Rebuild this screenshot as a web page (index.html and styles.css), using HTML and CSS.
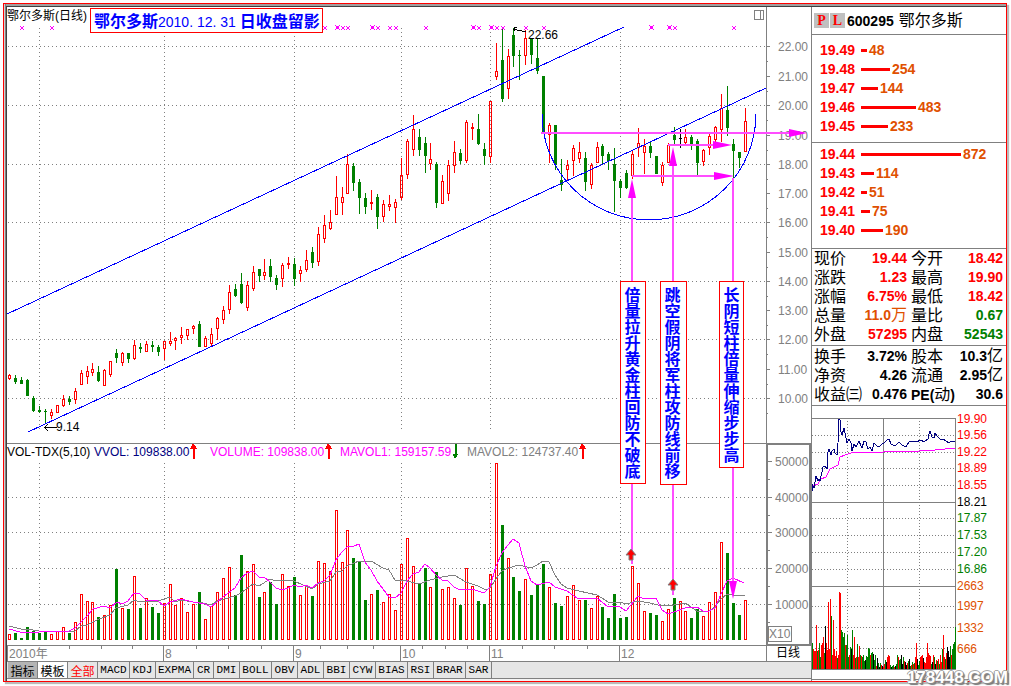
FILE: index.html
```html
<!DOCTYPE html>
<html lang="zh-CN">
<head>
<meta charset="utf-8">
<title>鄂尔多斯(日线) 600295</title>
<meta name="viewport" content="width=device-width, initial-scale=1">
<link rel="stylesheet" href="styles.css">
</head>
<body>
<div class="frame">
<div class="window">
  <main class="main">
    <svg class="chart" viewBox="7 7 804 655" role="img" aria-label="鄂尔多斯日线">
      <g class="grid" id="grid"></g>
      <g class="rule">
        <path d="M766.5 7V662M7 443.5H811M7 645.5H811M7 661.5H811M7.5 645V662"/>
        <path class="thick" d="M767 444H810V645H767Z"/>
        <path id="ticks"/>
        <rect x="768.5" y="626.5" width="23" height="15"/>
        <path d="M754.5 10.5H763.5V19.5H754.5ZM760.5 10V20"/>
      </g>
      <g id="axis" class="axis"></g>
      <g id="marks" class="marks"></g>
      <g id="candles"></g>
      <polyline class="ma2" points="9,626 21,629 33,630 39,631 69,632 75,631 81,626 87,625 99,619 110,615 116,608 128,605 134,600 140,602 158,601 170,597 175,602 181,600 193,602 199,602 211,605 217,601 235,596 241,593 253,584 259,586 270,579 276,581 282,580 294,581 312,589 318,584 330,581 336,572 342,571 347,566 359,561 371,561 383,568 389,570 395,580 407,581 419,584 430,580 442,577 454,575 466,582 478,586 486,590 490,588 496,579 502,571 508,568 519,565 531,568 537,565 543,561 549,562 555,575 561,584 567,588 579,591 597,595 602,598 608,602 620,602 626,604 638,601 650,603 662,606 674,605 685,603 697,611 709,611 715,607 721,599 727,594 739,596 745,595"/>
      <polyline class="ma1" points="9,629 20,632 39,632 69,631 75,628 87,616 93,609 104,606 110,608 117,602 122,604 128,601 134,593 140,594 146,600 158,601 164,606 170,602 181,599 193,602 205,604 211,607 217,602 223,597 235,588 241,578 247,573 253,571 259,577 264,577 270,582 276,588 282,590 288,588 294,585 300,587 306,585 312,588 318,583 324,581 330,575 336,560 342,552 347,547 354,546 359,544 365,562 371,570 377,581 383,589 389,597 395,598 401,593 407,581 413,574 419,572 425,564 430,568 436,575 442,580 448,581 454,587 460,590 472,589 484,593 490,587 496,566 502,553 508,545 513,539 519,543 525,566 531,581 537,585 549,582 555,587 567,591 577,598 597,598 608,607 615,606 620,607 626,611 638,596 644,599 656,598 662,610 668,614 674,612 685,608 697,607 703,611 709,611 715,608 721,594 727,581 733,578 744,583"/>

      <g class="trend">
        <path d="M7 314L624 27M28 432L766 88"/>
        <path d="M542 114A107 106 0 0 0 756 114"/>
      </g>

      <g class="pointer">
        <path d="M541 133H796M668 145H720M632 176H720M632 190V564M673 158V595M733 178V588"/>
        <path class="head" d="M807 133L789 129V137ZM732 145L713 141V149ZM734 176L714 172V180ZM632 179L628 198H636ZM673 147L669 166H677ZM733 599L729 581H737Z"/>
      </g>
      <g class="up"><path d="M631 549L636 555H633V560H629V555H626ZM673 579L678 585H675V590H671V585H668Z"/></g>

      <g class="note-box">
        <rect x="620.5" y="281.5" width="25" height="202"/>
        <rect x="660.5" y="281.5" width="26" height="203"/>
        <rect x="719.5" y="281.5" width="24" height="186"/>
        <rect x="90.5" y="8.5" width="232" height="24"/>
      </g>
      <g class="note">
        <text class="vertical" x="631" y="287">倍量拉升黄金柱回防不破底</text>
        <text class="vertical" x="671" y="287">跳空假阴将军柱攻防线前移</text>
        <text class="vertical" x="730" y="287">长阴短柱倍量伸缩步步高</text>
        <text x="94" y="27">鄂尔多斯<tspan class="date">2010. 12. 31 </tspan>日收盘留影</text>
      </g>

      <g class="black">
        <text x="7" y="20">鄂尔多斯(日线)</text>
        <text x="528" y="39">22.66</text>
        <text x="56" y="431">9.14</text>
        <text x="7" y="456">VOL-TDX(5,10)</text>
        <text x="776" y="657">日线</text>
        <path d="M513 29L526 32M517 27H514V31M45 427.5H57M48 424L45 427.5L48 431"/>
      </g>
      <text class="navy" x="94" y="456">VVOL: 109838.00</text>
      <text class="magenta" x="210" y="456">VOLUME: 109838.00</text>
      <text class="magenta" x="340" y="456">MAVOL1: 159157.59</text>
      <text class="gray" x="467" y="456">MAVOL2: 124737.40</text>
      <path class="sign-up" d="M193 444L196 448H194V458H193V448H191ZM328 444L331 448H329V458H328V448H326ZM582 444L585 448H583V458H582V448H580Z"/>
      <path class="sign-down" d="M455 458L458 454H456V444H455V454H453Z"/>
    </svg>

    <nav class="tabs" aria-label="指标">
      <button class="tab tab-cjk tab-dark" type="button">指标</button>
      <button class="tab tab-cjk tab-white" type="button">模板</button>
      <button class="tab tab-cjk tab-active" type="button">全部</button>
      <button class="tab w4" type="button">MACD</button>
      <button class="tab w3" type="button">KDJ</button>
      <button class="tab w5" type="button">EXPMA</button>
      <button class="tab w2" type="button">CR</button>
      <button class="tab w3" type="button">DMI</button>
      <button class="tab w4" type="button">BOLL</button>
      <button class="tab w3" type="button">OBV</button>
      <button class="tab w3" type="button">ADL</button>
      <button class="tab w3" type="button">BBI</button>
      <button class="tab w3" type="button">CYW</button>
      <button class="tab w4" type="button">BIAS</button>
      <button class="tab w3" type="button">RSI</button>
      <button class="tab w4" type="button">BRAR</button>
      <button class="tab w3" type="button">SAR</button>
    </nav>
  </main>

  <aside class="side">
    <header class="stock">
      <button class="badge" type="button">P</button>
      <button class="badge" type="button">L</button>
      <b class="code">600295</b>
      <span class="name">鄂尔多斯</span>
    </header>
    <ul class="book asks" id="asks"></ul>
    <ul class="book bids" id="bids"></ul>
    <table class="quote">
      <colgroup><col class="c1"><col class="c2"><col class="c3"><col></colgroup>
      <tbody>
        <tr><th>现价</th><td class="r">19.44</td><th>今开</th><td class="r">18.42</td></tr>
        <tr><th>涨跌</th><td class="r">1.23</td><th>最高</th><td class="r">19.90</td></tr>
        <tr><th>涨幅</th><td class="r">6.75%</td><th>最低</th><td class="r">18.42</td></tr>
        <tr><th>总量</th><td class="o">11.0<i>万</i></td><th>量比</th><td class="g">0.67</td></tr>
        <tr><th>外盘</th><td class="r">57295</td><th>内盘</th><td class="g">52543</td></tr>
      </tbody>
    </table>
    <table class="quote quote-b">
      <colgroup><col class="c1"><col class="c2"><col class="c3"><col></colgroup>
      <tbody>
        <tr><th>换手</th><td>3.72%</td><th>股本</th><td>10.3<i>亿</i></td></tr>
        <tr><th>净资</th><td>4.26</td><th>流通</th><td>2.95<i>亿</i></td></tr>
        <tr><th>收益㈢</th><td>0.476</td><th><b>PE(</b>动<b>)</b></th><td>30.6</td></tr>
      </tbody>
    </table>
    <svg class="chart" viewBox="812 406 194 275" role="img" aria-label="分时走势">
      <path class="dots" d="M812 435.5H955M812 452.5H955M812 468.5H955M812 485.5H955M812 518.5H955M812 535.5H955M812 552.5H955M812 569.5H955M812 606.5H955M812 627.5H955M812 648.5H955M847.5 418V669M919.5 418V669"/>
      <path class="rule" d="M812 418.5H955.5V669.5H812M812 502.5H955M812 586.5H955M883.5 418V669M812 679.5H1006"/>
      <g id="intraday"></g>
      <polyline class="avg" points="812,486 818,484 821,479 826,477 830,469 834,467 838,465 840,457 845,455 851,453 865,452 883,452 893,451 919,451 935,450 955,448"/>
      <polyline class="price" points="812,491 812,484 814,488 816,476 818,481 819,479 820,481 823,467 825,466 827,469 828,452 829,449 831,455 832,451 834,449 835,453 837,455 838,443 839,419 840,420 841,432 842,435 844,428 845,433 847,443 849,439 851,443 852,451 854,444 856,447 859,441 861,446 862,448 864,441 866,442 868,449 870,447 872,451 874,443 877,446 879,447 882,444 884,443 887,440 889,439 891,444 895,446 899,442 902,445 906,447 909,442 913,441 916,442 921,440 924,442 928,439 929,434 930,431 932,437 934,438 935,433 938,437 940,439 943,439 946,441 949,443 951,441 955,441"/>
      <g id="side-axis"></g>
    </svg>
  </aside>
</div>
</div>
<div class="watermark">178448.COM</div>
<script src="chart.js"></script>
</body>
</html>
```
FILE: styles.css
```css
* { box-sizing: border-box; }

body {
  margin: 0;
  position: relative;
  background: #fff;
  color: #000;
  font: 12px/16px "Liberation Sans", "Noto Sans CJK SC", sans-serif;
}

.frame {
  margin: 3px 4px 4px 3px;
  border: 1px solid #f00;
  box-shadow: 2px 2px 1px #bbb;
  background: linear-gradient(90deg, #d0d0d0 50%, #808080 50%) 0 0 / 2px 100% no-repeat;
  padding-left: 2px;
}

.window {
  display: grid;
  grid-template-columns: minmax(0, 1fr) 195px;
  border-left: 1px solid #404040;
  border-top: 1px solid #404040;
  box-shadow: 0 -2px 0 #a0a0a0;
  margin-top: 2px;
}

.main { display: flex; flex-direction: column; min-width: 0; }
.chart { display: block; width: 100%; height: auto; }

.chart path, .chart rect, .chart polyline, .chart line { shape-rendering: crispEdges; fill: none; stroke-width: 1; }
.chart text { font-size: 12px; }

.grid path { stroke: #808080; stroke-dasharray: 1 3; }
.rule, .rule path { stroke: #808080; }
.chart .thick { stroke-width: 2; }
.axis text, .gray { fill: #808080; }
.marks path { stroke: #f0f; }
.marks .solid { fill: #f0f; stroke: none; }

.chart .ma1, .chart .avg { stroke: #f0f; }
.chart .ma2 { stroke: #808080; }
.chart .price { stroke: #000080; }

.red path { stroke: #f00; }
.green path { stroke: #008000; }
.black path { stroke: #000; }
.chart .fill-red { fill: #f00; }
.chart .fill-green { fill: #008000; }
.chart .fill-black { fill: #000; }

.trend path { stroke: #00f; }
.chart .up path { fill: #f00; stroke: #808080; shape-rendering: auto; }
.chart .pointer path { stroke: #ff4dff; stroke-width: 2; }
.chart .pointer .head { fill: #f0f; stroke: none; shape-rendering: auto; }

.chart .note-box rect { fill: #fff; stroke: #f00; }
.chart .note text { fill: #00f; font-size: 16px; font-weight: 700; }
.note .vertical { writing-mode: vertical-rl; }
.note .date { font-size: 14px; font-weight: 400; }

.navy { fill: #000080; }
.magenta { fill: #f0f; }
.chart .sign-up { fill: #f00; stroke: #f00; }
.chart .sign-down { fill: #008000; stroke: #008000; }

.tabs {
  display: flex;
  flex: 1;
  padding: 0 0 2px 1px;
  background: linear-gradient(#808080, #808080) 0 16px / 100% 1px no-repeat,
    linear-gradient(#e6e6e6, #e6e6e6) 0 0 / 100% 16px no-repeat, #f4f4f4;
}

.tab {
  height: 17px;
  padding: 0;
  border: 0;
  border-right: 1px solid #808080;
  border-bottom: 1px solid #808080;
  background: #e6e6e6;
  color: #000;
  font: 11px/15px "Liberation Mono", monospace;
}

.tab-cjk { width: 30px; font: 12px/15px "Noto Sans CJK SC", sans-serif; }
.tab-dark { background: #b4b4b4; }
.tab-white { background: #fff; }
.tab-active { color: #f00; }
.w2 { width: 20px; }
.w3 { width: 26px; }
.w4 { width: 32px; }
.w5 { width: 38px; }

.side { border-left: 1px solid #808080; }

.stock {
  display: flex;
  align-items: center;
  gap: 1px;
  height: 28px;
  padding: 0 2px;
  border-bottom: 1px solid #808080;
}

.badge {
  width: 15px;
  height: 15px;
  padding: 0;
  border: 0;
  background: #c0c0c0;
  color: #f00;
  font: 700 14px/15px "Liberation Serif", serif;
}

.code { margin-left: 1px; font-size: 14px; }
.name { margin-left: 4px; font-size: 16px; }

.book {
  list-style: none;
  margin: 0;
  padding: 6px 0 6px 8px;
  border-bottom: 1px solid #808080;
  font-size: 14px;
  font-weight: 700;
  line-height: 19px;
  color: #f00;
}

.bids { padding: 2px 0 8px 8px; }
.book li { display: flex; align-items: center; gap: 2px; }
.book .cost { width: 39px; }
.book .bar { height: 3px; background: #f00; }
.book .lots { color: #e05000; }

.quote {
  width: 100%;
  table-layout: fixed;
  border-collapse: separate;
  border-spacing: 0;
  border-bottom: 1px solid #808080;
  padding-bottom: 1px;
  font-size: 14px;
  line-height: 17px;
}

.quote-b { padding: 1px 0; }
.c1 { width: 50px; }
.c2 { width: 45px; }
.c3 { width: 47px; }
.quote th { height: 19px; padding: 0 0 0 2px; font-size: 16px; font-weight: 400; text-align: left; white-space: nowrap; }
.quote td { height: 19px; padding: 0; font-weight: 700; text-align: right; white-space: nowrap; }
.quote td:last-child { padding-right: 3px; }
.quote th + td + th { padding-left: 4px; }
.quote th b { font-size: 14px; line-height: 1; }
.quote i { font-style: normal; font-weight: 400; font-size: 16px; line-height: 1; }
.r { color: #f00; }
.g { color: #008000; }
.o { color: #e05000; }

.chart .dots { stroke: #808080; stroke-dasharray: 1 2; }
.chart .t-red { fill: #f00; }
.chart .t-black { fill: #000; }
.chart .t-green { fill: #008000; }
.chart .t-orange { fill: #e05000; }

.watermark {
  position: absolute;
  right: 3px;
  bottom: -2px;
  color: #fff;
  font-size: 17px;
  font-weight: 700;
  line-height: 20px;
  text-shadow: 1px 1px 0 #888, -1px 0 0 #999, 0 -1px 0 #aaa, 1px 0 0 #888, 2px 2px 1px #777;
}
```
FILE: chart.js
```js
const byId = (id) => document.getElementById(id);
const path = (d, cls) => `<path class="${cls || ''}" d="${d}"/>`;
const label = (x, y, s, cls) => `<text class="${cls || ''}" x="${x}" y="${y}">${s}</text>`;

// Grid
const months = [39, 164, 294, 401, 490, 620];
let grid = '';
[46, 105, 164, 222, 281, 339, 398, 497, 532, 568, 604].forEach((y) => { grid += path(`M8 ${y}.5H766`); });
months.forEach((x) => { grid += path(`M${x}.5 28V429M${x}.5 463V640`); });
byId('grid').innerHTML = grid;

// Axis ticks and labels
const priceY = [46, 76, 105, 135, 164, 193, 222, 252, 281, 310, 339, 369, 398];
const volumeY = [461, 497, 532, 568, 604];
let ticks = '';
let axis = '';
priceY.forEach((y, i) => {
  ticks += `M767 ${y}.5H770M767 ${y + 15}.5H768`;
  axis += label(778, y + 5, (22 - i).toFixed(2));
});
volumeY.forEach((y, i) => {
  ticks += `M768 ${y}.5H772M768 ${y + 18}.5H770`;
  axis += label(775, y + 5, 50000 - i * 10000);
});
[163, 293, 400, 489, 619].forEach((x) => { ticks += `M${x}.5 645V661`; });
[69, 101, 132, 196, 228, 261, 320, 347, 373, 422, 445, 467, 522, 554, 587].forEach((x) => { ticks += `M${x}.5 646V649`; });
axis += label(9, 658, '2010年') + label(165, 658, '8') + label(295, 658, '9') + label(402, 658, '10')
  + label(491, 658, '11') + label(621, 658, '12') + label(769, 638, 'X10');
byId('ticks').setAttribute('d', ticks);
byId('axis').innerHTML = axis;

// Event marks along the top
let marks = '';
[22, 52, 325, 343, 348, 378, 390, 396, 426, 479, 497, 503, 526, 544, 675, 734].forEach((x) => {
  marks += path(`M${x - 2} 26L${x + 2} 30M${x + 2} 26L${x - 2} 30`);
});
[337, 372, 473, 491, 651, 669].forEach((x) => {
  marks += path(`M${x - 2} 25L${x + 3} 30M${x + 3} 25L${x - 2} 30`) + path(`M${x - 1} 26H${x + 2}V29H${x - 1}Z`, 'solid');
});
byId('marks').innerHTML = marks;

// x, colour, high, body top, body bottom, low, volume top
const days = `9 r 374 375 378 379 634;15 g 375 378 381 383 633;21 g 377 380 383 383 638;27 g 379 380 395 395 627;
33 g 396 398 410 411 631;39 g 406 410 411 412 633;45 g 409 411 411 423 632;51 r 409 412 415 418 634;57 r 405 405 412 412 631;
63 r 395 399 405 406 627;69 g 396 399 401 404 633;75 r 388 391 399 403 622;81 r 370 373 384 384 594;87 r 366 371 376 383 601;
92 r 363 369 372 375 602;98 g 366 372 380 381 617;104 r 369 370 385 385 615;110 r 361 361 374 376 605;116 g 349 353 357 362 569;
122 r 352 353 362 365 608;128 g 353 353 358 362 609;134 r 340 345 358 359 576;140 g 343 347 348 352 608;146 r 341 344 351 351 598;
152 g 341 345 346 351 607;158 g 345 347 351 355 613;164 r 341 341 348 359 603;170 r 332 341 343 345 584;175 r 337 338 340 349 605;
181 r 327 335 337 343 598;187 r 329 329 335 339 612;193 r 325 326 328 333 604;199 g 321 324 346 346 592;205 r 336 338 346 346 619;
211 r 328 334 343 345 606;217 r 317 318 328 339 592;223 r 306 310 319 323 578;229 r 285 292 309 313 567;235 g 284 289 295 296 595;
241 g 273 284 302 303 555;247 r 281 285 307 310 571;253 r 266 272 288 290 564;259 g 269 269 275 281 597;264 r 259 272 275 279 592;
270 g 259 266 276 281 582;276 g 275 278 284 289 604;282 r 263 265 278 286 574;288 r 257 263 264 268 586;294 g 258 264 278 285 577;
300 r 266 270 273 281 595;306 r 250 260 269 271 586;312 g 247 252 262 267 596;318 r 227 234 261 265 561;324 r 215 225 238 242 563;
330 r 210 222 228 229 571;336 r 176 197 214 214 510;342 r 187 197 202 214 562;347 r 154 164 193 193 530;353 g 163 166 182 190 558;
359 g 179 182 197 213 562;365 g 193 198 206 213 600;371 r 190 202 203 209 594;377 g 194 197 216 228 590;383 r 200 204 216 221 602;
389 r 195 204 206 210 594;395 r 199 202 207 222 610;401 r 158 175 197 199 564;407 r 139 141 174 178 538;413 r 115 129 149 155 566;
419 g 129 137 149 155 583;425 g 137 143 155 172 568;430 r 143 159 163 169 587;436 g 162 164 202 207 572;442 r 175 181 203 203 589;
448 r 160 165 193 200 587;454 r 141 152 165 172 598;460 g 149 153 160 163 605;466 r 120 122 160 162 568;472 r 123 127 128 139 586;
478 g 114 129 143 144 601;484 g 143 149 155 164 604;490 r 101 101 156 162 574;496 r 43 71 76 79 463;502 g 29 60 98 101 525;
508 r 49 56 88 98 558;513 g 28 35 55 66 577;519 g 50 55 55 79 591;525 r 30 38 55 64 579;531 g 38 38 54 63 595;537 g 39 58 70 73 584;
543 g 76 76 132 132 564;549 r 123 125 134 162 587;555 g 125 125 164 169 603;561 g 159 180 184 190 606;567 r 160 165 169 179 596;
573 r 145 148 160 175 585;579 r 142 152 158 162 600;585 g 152 158 181 190 600;591 r 163 165 184 188 608;597 r 142 147 162 162 596;
602 g 144 146 155 164 607;608 g 152 154 160 169 618;614 g 148 164 180 211 594;620 g 179 181 187 197 618;626 g 170 173 187 188 617;
632 r 150 154 175 178 566;638 r 128 143 147 156 583;644 r 139 146 152 173 611;650 g 142 146 152 157 613;656 g 156 156 173 173 615;
662 r 162 165 182 185 621;668 r 143 145 162 162 609;674 g 127 135 139 144 598;680 k 129 138 138 147 601;685 r 129 137 142 144 611;
691 g 135 137 144 149 618;697 g 139 141 162 175 609;703 r 149 150 161 165 616;709 r 134 136 147 154 602;715 r 126 127 139 144 592;
721 r 94 108 129 141 542;727 g 86 110 127 135 553;733 g 139 144 150 178 603;739 g 152 152 157 167 615;745 r 108 121 151 151 600`;

const shapes = { r: '', g: '', k: '' };
let solidGreen = '';
days.split(';').forEach((row) => {
  const [xs, colour, ...rest] = row.trim().split(' ');
  const x = Number(xs);
  const [high, top, bottom, low, vol] = rest.map(Number);
  if (colour === 'r') {
    shapes.r += `M${x + 0.5} ${high}V${top}M${x + 0.5} ${bottom + 1}V${low + 1}`;
    shapes.r += `M${x - 0.5} ${top + 0.5}h2V${bottom + 0.5}h-2Z`;
  } else {
    shapes[colour] += `M${x + 0.5} ${high}V${low + 1}M${x - 1} ${top + 0.5}h3`;
    if (colour === 'g') solidGreen += `M${x - 1} ${top}h3V${bottom + 1}h-3Z`;
  }
  if (colour === 'g') solidGreen += `M${x - 1} ${vol}h3V640h-3Z`;
  else shapes.r += `M${x - 0.5} ${vol + 0.5}h2V639.5h-2Z`;
});
byId('candles').innerHTML = `<g class="red">${path(shapes.r)}</g><g class="green">${path(shapes.g)}</g>`
  + `<g class="black">${path(shapes.k)}</g>${path(solidGreen, 'fill-green')}`;

// Order book
const book = (id, rows) => {
  byId(id).innerHTML = rows.map(([cost, width, lots]) =>
    `<li><span class="cost">${cost}</span><span class="bar" style="width:${width}px"></span><span class="lots">${lots}</span></li>`).join('');
};
book('asks', [['19.49', 6, 48], ['19.48', 29, 254], ['19.47', 17, 144], ['19.46', 55, 483], ['19.45', 27, 233]]);
book('bids', [['19.44', 100, 872], ['19.43', 13, 114], ['19.42', 6, 51], ['19.41', 9, 75], ['19.40', 22, 190]]);

// Intraday volume: one bar per pixel column
const bars = '26 20 18 18 44 18 19 26 12 24 26 32 16 43 26 19 67 20 70 53 14 49 20 13 18 11 14 77 76 39 37 32 36 24 24 34 12 14 22 20 39 14 32 11 12 25 12 23 14 13 12 14 8 9 13 12 21 20 14 16 17 15 9 14 3 11 6 2 6 4 3 2 5 9 7 12 14 13 4 2 3 4 2 3 5 14 12 9 10 14 5 12 8 7 4 6 8 10 3 4 7 5 6 12 26 10 4 8 12 13 14 11 7 6 12 26 16 14 13 5 7 14 12 5 9 8 10 5 14 7 20 34 12 10 16 22 18 12 23 14 20 25 27 42'.split(' ');
const tints = 'grrrrgrggrrrgkrrrrrgrrrrrgrrrggggrgggrgkgrrgrgrrgrgggkggggrggkggrkgkgrkrrgkrrrgkggrkggrggkkgrkkrgkgrgrgrrkggrrrkrrrrrrrgkrgkrgrgrrgrrgrkkkgrggg';
const names = { r: 'fill-red', g: 'fill-green', k: 'fill-black' };
byId('intraday').innerHTML = bars.slice(0, 144).map((h, i) => path(`M${812 + i} 669h1v-${h}h-1Z`, names[tints[i]] || 'fill-green')).join('');

// Intraday axis
const side = [[419, '19.90', 'red'], [435, '19.56', 'red'], [452, '19.22', 'red'], [468, '18.89', 'red'], [485, '18.55', 'red'],
  [502, '18.21', 'black'], [518, '17.87', 'green'], [535, '17.53', 'green'], [552, '17.20', 'green'], [569, '16.86', 'green'],
  [586, '2663', 'orange'], [606, '1997', 'orange'], [628, '1332', 'orange'], [649, '666', 'orange']];
byId('side-axis').innerHTML = side.map(([y, s, c]) => label(957, y + 4, s, `t-${c}`)).join('');
```
